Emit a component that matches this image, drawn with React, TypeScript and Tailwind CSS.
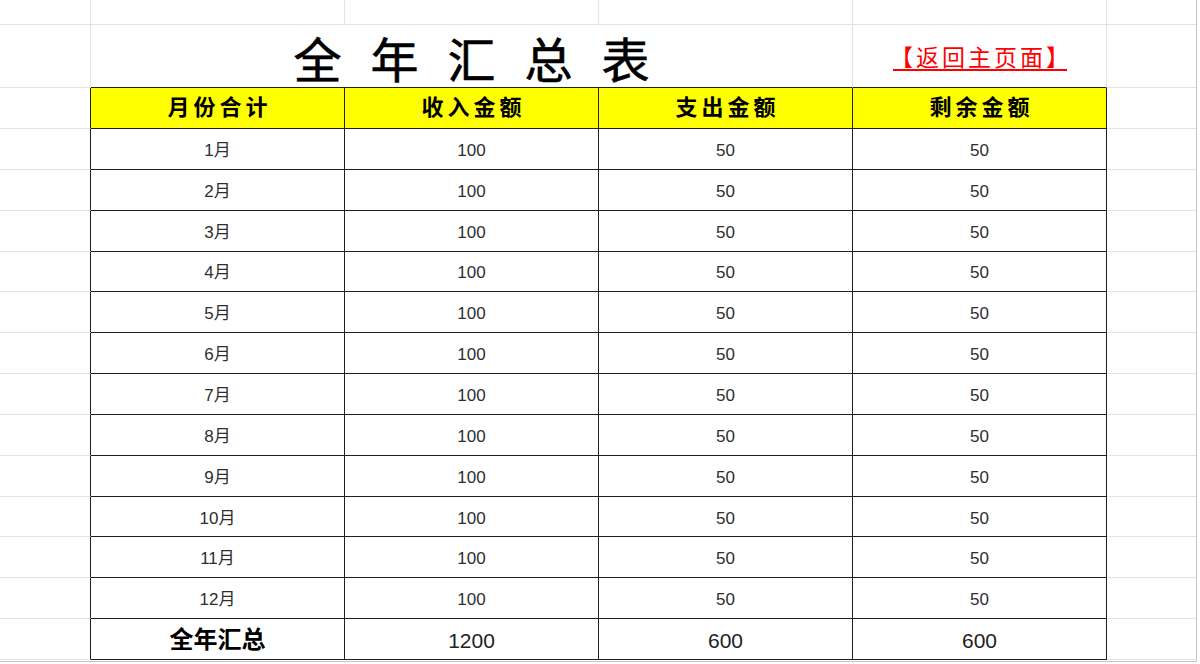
import React from "react";

const rows = Array.from({ length: 12 }, (_, i) => ({
  month: `${i + 1}月`,
  income: 100,
  spend: 50,
  left: 50,
}));

const font = "font-[Liberation_Sans,Noto_Sans_CJK_SC,sans-serif]";

function SideLeft({ table }: { table?: boolean }) {
  return (
    <div
      className={`w-[91px] shrink-0 border-b border-r border-b-[#e3e3e3] ${
        table ? "border-r-[#1f1f1f]" : "border-r-[#e3e3e3]"
      }`}
    />
  );
}

function SideRight() {
  return <div className="flex-1 border-b border-b-[#e3e3e3]" />;
}

function Cell({
  children,
  className = "",
}: {
  children?: React.ReactNode;
  className?: string;
}) {
  return (
    <div
      className={`w-[254px] shrink-0 border-b border-r border-[#1f1f1f] flex items-center justify-center ${className}`}
    >
      {children}
    </div>
  );
}

export default function App() {
  return (
    <div className={`w-[1200px] h-[664px] bg-white overflow-hidden ${font}`}>
      <div className="w-[1197px] h-[662px] border-r border-b border-[#c4c4c4] flex flex-col">
        {/* empty first sheet row */}
        <div className="flex h-[25px] shrink-0">
          <SideLeft />
          {[0, 1, 2, 3].map((i) => (
            <div key={i} className="w-[254px] shrink-0 border-b border-r border-[#e3e3e3]" />
          ))}
          <SideRight />
        </div>

        {/* title row */}
        <div className="flex h-[63px] shrink-0">
          <SideLeft />
          <div className="w-[762px] shrink-0 border-r border-b border-r-[#e3e3e3] border-b-[#1f1f1f] flex items-center justify-center pt-[12px]">
            <span className="text-[48px] leading-none tracking-[29px] pl-[29px] text-black [-webkit-text-stroke:0.6px_black]">
              全年汇总表
            </span>
          </div>
          <div className="w-[254px] shrink-0 border-r border-b border-r-[#e3e3e3] border-b-[#1f1f1f] flex items-center justify-center pt-[3px]">
            <div className="w-[174px] flex justify-center border-b-2 border-[#ff0000] pb-[1px]">
              <span className="whitespace-nowrap font-[Noto_Sans_CJK_SC,sans-serif] text-[23px] leading-[24px] tracking-[3px] pl-[3px] text-[#ff0000]">
                【返回主页面】
              </span>
            </div>
          </div>
          <SideRight />
        </div>

        {/* header */}
        <div className="flex h-[41px] shrink-0">
          <SideLeft table />
          {["月份合计", "收入金额", "支出金额", "剩余金额"].map((t) => (
            <Cell key={t} className="bg-[#ffff00]">
              <span className="text-[22px] font-bold tracking-[4px] pl-[4px] text-black leading-none">
                {t}
              </span>
            </Cell>
          ))}
          <SideRight />
        </div>

        {/* months */}
        {rows.map((r) => (
          <div key={r.month} className="flex h-[40.85px] shrink-0">
            <SideLeft table />
            {[r.month, r.income, r.spend, r.left].map((v, i) => (
              <Cell key={i}>
                <span className="text-[17px] text-[#2e2e2e] leading-none pt-[3px]">{v}</span>
              </Cell>
            ))}
            <SideRight />
          </div>
        ))}

        {/* totals */}
        <div className="flex h-[40.85px] shrink-0">
          <SideLeft table />
          <Cell>
            <span className="text-[24px] font-bold text-black leading-none pt-[2px]">全年汇总</span>
          </Cell>
          {["1200", "600", "600"].map((v, i) => (
            <Cell key={i}>
              <span className="text-[21px] text-[#222] leading-none pt-[3px]">{v}</span>
            </Cell>
          ))}
          <SideRight />
        </div>
      </div>
    </div>
  );
}
